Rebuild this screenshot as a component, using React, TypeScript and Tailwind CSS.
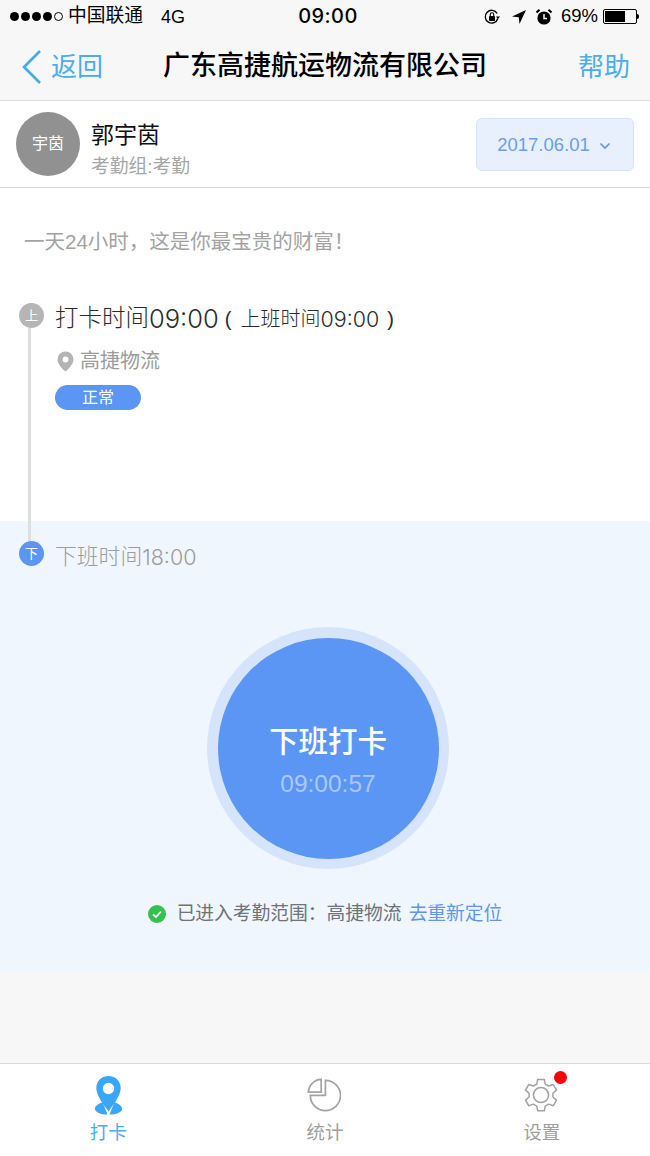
import React from "react";

const F = { fontFamily: '"Liberation Sans", "Noto Sans CJK SC", sans-serif' };

function StatusBar() {
  return (
    <div className="h-[33px] flex items-center pl-[10px] pr-[11px] text-black relative">
      <div className="flex items-center gap-[2px]">
        {[0, 1, 2, 3].map((i) => (
          <span key={i} className="w-[9px] h-[9px] rounded-full bg-black" />
        ))}
        <span className="w-[9px] h-[9px] rounded-full border border-black" />
      </div>
      <span className="text-[18.750px] ml-[5px] leading-none">中国联通</span>
      <span className="text-[18px] ml-[18px] leading-none">4G</span>
      <span className="absolute left-0 right-0 pl-[6px] pb-[2px] text-center text-[20px] font-medium leading-none tracking-[0.4px]" style={{ fontFamily: "Inter, sans-serif" }}>09:00</span>
      <div className="ml-auto flex items-center">
        <svg width="18" height="18" viewBox="0 0 18 18" className="mr-[10px]">
          <path d="M14.800 10.500A6.400 6.400 0 1 1 14.200 5.500" fill="none" stroke="#000" strokeWidth="1.400" />
          <path d="M17 8.500h-4l2 2.600z" fill="#000" />
          <rect x="6" y="8" width="6" height="5" rx="0.800" fill="#000" />
          <path d="M7.300 8V6.500a1.700 1.700 0 0 1 3.400 0V8" fill="none" stroke="#000" strokeWidth="1.100" />
        </svg>
        <svg width="16" height="16" viewBox="0 0 16 16" className="mr-[8px]">
          <path d="M15 1 1 7.600l6.800.7.7 6.700z" fill="#000" />
        </svg>
        <svg width="18" height="18" viewBox="0 0 18 18" className="mr-[8px]">
          <circle cx="9" cy="10" r="6.600" fill="#000" />
          <path d="M9 6v4.500h3" fill="none" stroke="#fff" strokeWidth="1.400" />
          <path d="M1.500 4.500 4.500 1.800M16.500 4.500 13.500 1.800" stroke="#000" strokeWidth="2.200" />
        </svg>
        <span className="text-[18.500px] leading-none">69%</span>
        <div className="ml-[5px] w-[34px] h-[15px] border border-black rounded-[2px] p-[1px]">
          <div className="h-full w-[68%] bg-black" />
        </div>
        <span className="w-[2px] h-[5px] bg-black rounded-r-sm" />
      </div>
    </div>
  );
}

function NavBar() {
  return (
    <div className="h-[68px] flex items-center pl-[21px] pr-[20px] relative border-b border-[#dcdcdc] box-border">
      <svg width="22" height="36" viewBox="0 0 22 36">
        <path d="M19 2 3 18l16 16" fill="none" stroke="#45a8ea" strokeWidth="2.600" />
      </svg>
      <span className="text-[26px] leading-none text-[#4badec] ml-[8px]">返回</span>
      <span className="absolute left-0 right-0 text-center text-[27px] leading-none font-medium text-black">广东高捷航运物流有限公司</span>
      <span className="text-[26px] leading-none text-[#4badec] ml-auto">帮助</span>
    </div>
  );
}

function UserRow() {
  return (
    <div className="h-[87px] bg-white border-b border-[#d4d4d4] flex items-center pl-[16px] pr-[16px] box-border">
      <div className="w-[64px] h-[64px] rounded-full bg-[#919191] flex items-center justify-center text-white text-[16px]">宇茵</div>
      <div className="ml-[11px] flex flex-col pt-[11px]">
        <span className="text-[23px] leading-[30px] text-[#111]">郭宇茵</span>
        <span className="text-[18.750px] leading-[26px] text-[#a6a6a6] mt-[4px]">考勤组:考勤</span>
      </div>
      <div className="ml-auto w-[158px] h-[53px] rounded-[6px] bg-[#e8f0fd] border border-[#d5e4fb] flex items-center justify-center text-[#6a9ef0] text-[18.500px] pr-[2px] pt-[1px]">
        2017.06.01
        <svg width="12" height="8" viewBox="0 0 12 8" className="ml-[9px] mt-[2px]">
          <path d="M1.500 1.500 6 6l4.500-4.500" fill="none" stroke="#5e97f0" strokeWidth="1.700" />
        </svg>
      </div>
    </div>
  );
}

const Digits = ({ size, children }: { size: string; children: React.ReactNode }) => (
  <span className={size} style={{ fontFamily: "Inter, sans-serif" }}>
    {children}
  </span>
);

function Morning() {
  return (
    <div className="h-[333px] bg-white pl-[19px] relative">
      <p className="text-[20.500px] leading-[26px] text-[#a3a3a3] pt-[41px] pl-[5px]">一天24小时，这是你最宝贵的财富！</p>
      <div className="mt-[48px] flex items-start">
        <span className="w-[25px] h-[25px] rounded-full bg-[#b5b5b5] text-white text-[13px] flex items-center justify-center">上</span>
        <div className="ml-[11px] h-[32px] flex items-center text-[#2b2b2b] font-light">
          <span className="text-[23.500px]">打卡时间</span>
          <Digits size="text-[25.500px]">09:00</Digits>
          <span className="ml-[6px] text-[20px]">(</span>
          <span className="ml-[9px] text-[20px]">上班时间</span>
          <Digits size="text-[21.500px]">09:00</Digits>
          <span className="ml-[8px] text-[20px]">)</span>
        </div>
      </div>
      <div className="mt-[12px] ml-[38px] flex items-center">
        <svg width="17" height="21" viewBox="0 0 17 21">
          <path fillRule="evenodd" d="M8.500 0.500a8 8 0 0 1 8 8c0 4.500-5 9.500-8 12-3-2.500-8-7.500-8-12a8 8 0 0 1 8-8zm0 5a3 3 0 1 0 0 6 3 3 0 0 0 0-6z" fill="#b3b3b3" />
        </svg>
        <span className="ml-[6px] text-[20px] leading-[28px] text-[#9c9c9c]">高捷物流</span>
      </div>
      <div className="mt-[10px] ml-[36px] w-[86px] h-[25px] rounded-full bg-[#5b96f5] text-white text-[16px] leading-none flex items-center justify-center">正常</div>
      <div className="absolute left-[28px] top-[140px] bottom-0 w-[3px] bg-[#dedede]" />
    </div>
  );
}

function Evening() {
  return (
    <div className="h-[451px] bg-[#f0f6fe] pl-[19px] relative">
      <div className="absolute left-[28px] top-0 h-[20px] w-[3px] bg-[#dedede]" />
      <div className="pt-[20px] flex items-start">
        <span className="w-[25px] h-[25px] rounded-full bg-[#5b96f5] text-white text-[13px] flex items-center justify-center">下</span>
        <div className="ml-[11px] h-[32px] flex items-center text-[#9c9c9c] font-light">
          <span className="text-[21.800px]">下班时间</span>
          <Digits size="text-[21.500px]">18:00</Digits>
        </div>
      </div>
      <div className="-ml-[19px] pl-[6px] mt-[54px] flex justify-center">
        <div className="w-[242px] h-[242px] rounded-full bg-[#d6e4fb] flex items-center justify-center">
          <div className="w-[221px] h-[221px] rounded-full bg-[#5b96f5] flex flex-col items-center justify-center pt-[25px]">
            <span className="text-[29.500px] leading-[38px] text-white font-medium">下班打卡</span>
            <span className="text-[24.500px] leading-[30px] text-[#a9c8f9] mt-[8px]">09:00:57</span>
          </div>
        </div>
      </div>
      <div className="-ml-[19px] mt-[32px] flex justify-center items-center">
        <svg width="18" height="18" viewBox="0 0 18 18">
          <circle cx="9" cy="9" r="9" fill="#35c152" />
          <path d="M5 9.300 8 12l5-5.500" fill="none" stroke="#fff" strokeWidth="1.700" />
        </svg>
        <span className="ml-[11px] text-[18.750px] leading-[26px] text-[#6f7276]">已进入考勤范围：高捷物流</span>
        <span className="ml-[7px] text-[18.750px] leading-[26px] text-[#5e97f0]">去重新定位</span>
      </div>
    </div>
  );
}

function TabBar() {
  return (
    <div className="h-[93px] bg-white border-t border-[#d9d9d9] box-border grid grid-cols-3">
      <div className="flex flex-col items-center pt-[12px]">
        <svg width="29" height="39" viewBox="0 0 28 40">
          <path d="M8 27C3.500 28.500 0 31 0 33.500 0 37 6 39.500 13 39.500l-5-12.500zM20 27c4.500 1.500 8 4 8 6.500 0 3.500-6 6-13 6L20 27z" fill="#3aa6f8" />
          <path fillRule="evenodd" d="M14 0C6.500 0 1.500 5.500 1.500 12.500 1.500 20 9 29 14 36.500 19 29 26.500 20 26.500 12.500 26.500 5.500 21.500 0 14 0zm0 7a5.800 5.800 0 1 1 0 11.600A5.800 5.800 0 0 1 14 7z" fill="#3aa6f8" />
        </svg>
        <span className="text-[18.500px] leading-[24px] text-[#4badec] mt-[6px]">打卡</span>
      </div>
      <div className="flex flex-col items-center pt-[14px]">
        <svg width="34" height="34" viewBox="0 0 36 36" fill="none" stroke="#a3a3a3" strokeWidth="1.800" className="mr-[2px]">
          <path d="M19.500 2.500A16 16 0 1 1 3.500 18.500h16z" />
          <path d="M15 1.500V15H1.500A14 14 0 0 1 15 1.500z" />
        </svg>
        <span className="text-[18.500px] leading-[24px] text-[#a0a0a0] mt-[9px]">统计</span>
      </div>
      <div className="flex flex-col items-center pt-[14px] relative">
        <svg width="34" height="34" viewBox="0 0 36 36" fill="none" stroke="#a3a3a3" strokeWidth="1.600" className="mr-[2px]">
          <path d="M14.500 1.500h7l1 5 3.600 2 4.800-1.700 3.500 6-3.800 3.300v4l3.800 3.300-3.500 6-4.800-1.700-3.600 2-1 5h-7l-1-5-3.600-2-4.800 1.700-3.500-6 3.800-3.300v-4L1.600 12.800l3.500-6 4.800 1.700 3.600-2z" strokeLinejoin="round" />
          <circle cx="18" cy="18" r="8" />
        </svg>
        <span className="text-[18.500px] leading-[24px] text-[#a0a0a0] mt-[9px]">设置</span>
        <span className="absolute left-[121px] top-[7px] w-[13px] h-[13px] rounded-full bg-[#fb0007]" />
      </div>
    </div>
  );
}

export default function App() {
  return (
    <div className="w-[650px] h-[1156px] bg-[#f7f7f7] flex flex-col overflow-hidden" style={F}>
      <StatusBar />
      <NavBar />
      <UserRow />
      <Morning />
      <Evening />
      <div className="flex-1" />
      <TabBar />
    </div>
  );
}
